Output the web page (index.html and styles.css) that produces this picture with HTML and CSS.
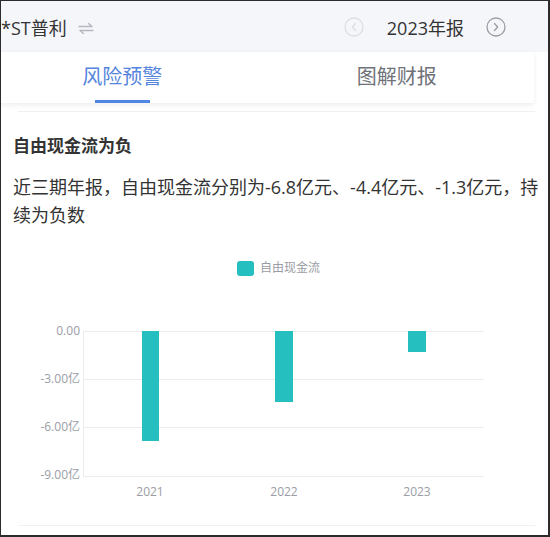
FILE: index.html
```html
<!DOCTYPE html>
<html lang="zh-CN">
<head>
  <meta charset="UTF-8">
  <meta name="viewport" content="width=device-width, initial-scale=1.0">
  <title>*ST普利 - 风险预警</title>
  <link rel="stylesheet" href="styles.css">
</head>
<body>

<div class="frame">
  <header class="top-bar">
    <span class="stock-name">*ST普利</span>
    <svg class="swap-icon" width="16" height="12" viewBox="0 0 16 12">
      <path d="M1 4.5h13M10.5 1.5l3.5 3" fill="none" stroke="#b5b8c0" stroke-width="1.4" stroke-linecap="round"/>
      <path d="M15 8.5h-13M5.5 11.5l-3.5-3" fill="none" stroke="#b5b8c0" stroke-width="1.4" stroke-linecap="round"/>
    </svg>
    <div class="period">
      <svg class="period-btn" width="20" height="20" viewBox="0 0 20 20">
        <circle cx="10" cy="10" r="9" fill="none" stroke="#dcdee3" stroke-width="1.3"/>
        <path d="M11.5 6.5l-3.2 3.5 3.2 3.5" fill="none" stroke="#dcdee3" stroke-width="1.3" stroke-linecap="round" stroke-linejoin="round"/>
      </svg>
      <span class="period-text">2023年报</span>
      <svg class="period-btn" width="20" height="20" viewBox="0 0 20 20">
        <circle cx="10" cy="10" r="9" fill="none" stroke="#9a9da5" stroke-width="1.3"/>
        <path d="M8.5 6.5l3.2 3.5-3.2 3.5" fill="none" stroke="#9a9da5" stroke-width="1.3" stroke-linecap="round" stroke-linejoin="round"/>
      </svg>
    </div>
  </header>

  <nav class="tabs">
    <a class="tab active" href="#risk">风险预警</a>
    <a class="tab" href="#report">图解财报</a>
  </nav>

  <div class="divider top"></div>

  <section class="risk" id="risk">
    <h3>自由现金流为负</h3>
    <p>近三期年报，自由现金流分别为-6.8亿元、-4.4亿元、-1.3亿元，持续为负数</p>
  </section>

  <svg class="chart" width="547" height="296" viewBox="0 0 547 296">
    <!-- legend -->
    <rect x="236" y="32" width="17" height="15" rx="3" fill="#24bfbe"/>
    <text class="legend-label" x="259" y="40">自由现金流</text>

    <!-- grid -->
    <g stroke="#ececef" stroke-width="1">
      <line x1="82" y1="102.5" x2="483" y2="102.5"/>
      <line x1="82" y1="150.5" x2="483" y2="150.5"/>
      <line x1="82" y1="198.5" x2="483" y2="198.5"/>
      <line x1="82" y1="247.5" x2="483" y2="247.5"/>
      <line x1="82.5" y1="102" x2="82.5" y2="248"/>
    </g>

    <g class="axis-label" text-anchor="end">
      <text x="79" y="103">0.00</text>
      <text x="79" y="151">-3.00亿</text>
      <text x="79" y="199">-6.00亿</text>
      <text x="79" y="247">-9.00亿</text>
    </g>

    <!-- bars -->
    <g fill="#24bfbe">
      <rect x="141" y="102" width="17" height="110"/>
      <rect x="274" y="102" width="18" height="71"/>
      <rect x="407" y="102" width="18" height="21"/>
    </g>

    <g class="axis-label" text-anchor="middle">
      <text x="149" y="264">2021</text>
      <text x="283" y="264">2022</text>
      <text x="416" y="264">2023</text>
    </g>
  </svg>

  <div class="divider"></div>
</div>

</body>
</html>
```

FILE: styles.css
```css
body {
  margin: 0;
  padding: 0;
  font-family: "Open Sans", "Noto Sans CJK SC", sans-serif;
  color: #333;
  background-color: #fff;
}
.frame {
  width: 550px;
  height: 537px;
  box-sizing: border-box;
  border: 1px solid #2b2b2b;
  border-right-width: 2px;
  border-bottom-width: 2px;
  overflow: hidden;
  background-color: #fff;
}
.top-bar {
  height: 51px;
  display: flex;
  align-items: center;
  background-color: #f5f6fa;
}
.stock-name {
  font-size: 18px;
  color: #333;
}
.swap-icon {
  margin-left: 11px;
  margin-top: 2px;
}
.period {
  margin-left: auto;
  margin-right: 42px;
  display: flex;
  align-items: center;
}
.period-btn {
  display: block;
}
.period-text {
  font-size: 18px;
  color: #333;
  margin: 0 22px 0 23px;
}
.tabs {
  display: flex;
  height: 51px;
  width: 549px;
  margin-left: -16px;
  background-color: #fff;
  box-shadow: 0 2px 5px rgba(0, 0, 0, 0.07);
  position: relative;
}
.tab {
  flex: 1;
  text-align: center;
  line-height: 50px;
  font-size: 20px;
  color: #6f7279;
  text-decoration: none;
  position: relative;
}
.tab.active {
  color: #5585dc;
}
.tab.active::after {
  content: "";
  position: absolute;
  left: 50%;
  bottom: 0;
  width: 55px;
  height: 3px;
  margin-left: -27px;
  background-color: #4f86e6;
}
.divider {
  height: 1px;
  background-color: #f0f1f3;
  margin: 0 13px 0 17px;
}
.divider.top {
  margin-top: 8px;
}
.risk {
  padding: 0 0 0 12px;
}
.risk h3 {
  margin: 22px 0 0;
  font-size: 17px;
  line-height: 24px;
  font-weight: bold;
  color: #333;
}
.risk p {
  margin: 15px 0 0;
  font-size: 18px;
  line-height: 28px;
  color: #333;
}
.chart {
  display: block;
}
.legend-label {
  font-size: 12px;
  fill: #9a9ca3;
  dominant-baseline: middle;
}
.axis-label {
  font-size: 12px;
  fill: #9a9da6;
  dominant-baseline: middle;
}
```
